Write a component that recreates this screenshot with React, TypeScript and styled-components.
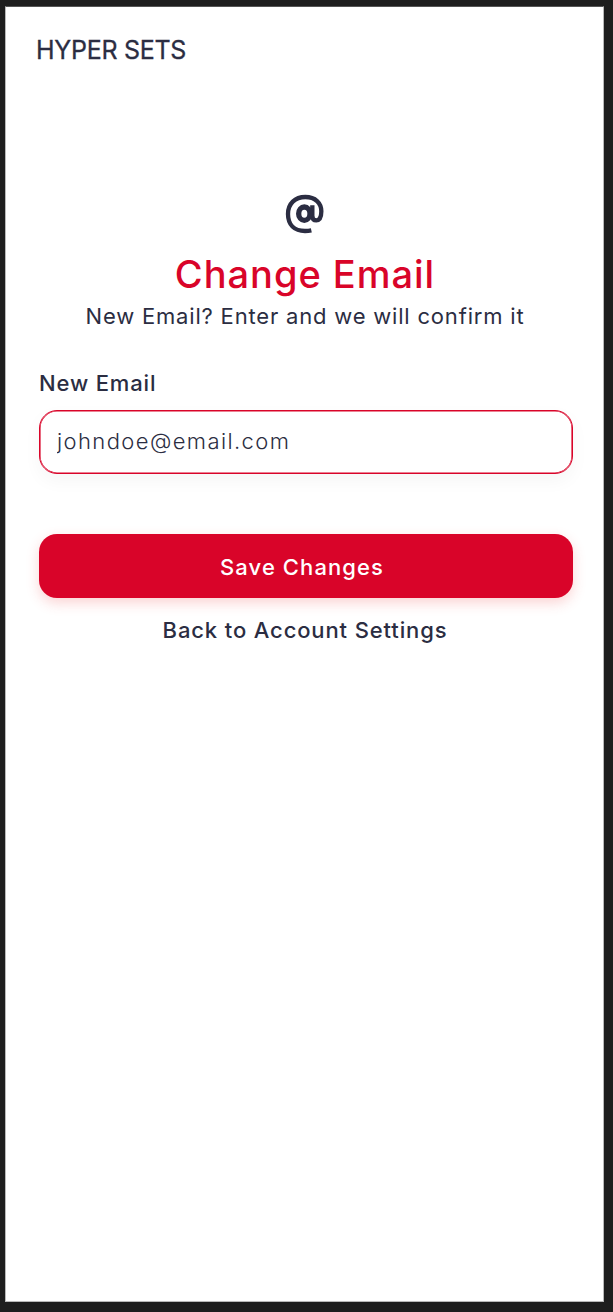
import React from 'react';
import styled, { createGlobalStyle } from 'styled-components';

const ink = '#2b2d42';
const red = '#d90429';

const GlobalStyle = createGlobalStyle`
  * { box-sizing: border-box; }
  body { margin: 0; background: #1e1e1e; font-family: Inter, sans-serif; }
`;
const Frame = styled.div`
  height: 1312px;
  padding: 6px 9px 10px 5px;
  background: #1e1e1e;
`;
const Screen = styled.main`
  height: 1296px;
  background: #fff;
  border: 1px solid #b9b9b9;
  border-top-color: #555;
  color: ${ink};
  padding: 26px 30px 0 33px;
  display: flex;
  flex-direction: column;
`;
const Brand = styled.header`
  margin-left: -3px;
  font-size: 25px;
  line-height: 34px;
  letter-spacing: -0.28px;
  -webkit-text-stroke: 0.3px ${ink};
`;
const Heading = styled.section`
  display: flex;
  flex-direction: column;
  align-items: center;
  margin-top: 127px;
  padding-right: 2px;
  white-space: nowrap;
`;
const AtIcon = styled.svg`
  width: 40px;
  height: 40px;
  margin-right: 2px;
`;
const Title = styled.h1`
  margin: 11px 0 0;
  font-size: 38px;
  line-height: 58px;
  font-weight: 500;
  letter-spacing: 0.98px;
  color: ${red};
`;
const Subtitle = styled.p`
  margin: -2px 0 0;
  font-size: 22px;
  line-height: 30px;
  letter-spacing: 0.81px;
`;
const Form = styled.form`
  display: flex;
  flex-direction: column;
  margin-top: 37px;
`;
const Label = styled.label`
  font-size: 22px;
  line-height: 30px;
  font-weight: 500;
  letter-spacing: 0.85px;
`;
const Field = styled.input`
  height: 64px;
  margin-top: 12px;
  border: 1px solid ${red};
  border-radius: 18px;
  padding: 0 17px 2px;
  font: 300 22px Inter, sans-serif;
  letter-spacing: 1.4px;
  color: ${ink};
  outline: none;
  box-shadow: inset 0 0 0 0.6px ${red}, 0 7px 18px rgba(0, 0, 0, 0.04);
`;
const SaveButton = styled.button`
  height: 64px;
  margin-top: 60px;
  padding: 1px 8px 0 0;
  border: 0;
  border-radius: 18px;
  background: ${red};
  color: #fff;
  font: 500 22px Inter, sans-serif;
  letter-spacing: 1.08px;
  box-shadow: 0 5px 13px rgba(239, 60, 60, 0.22);
`;
const BackLink = styled.a`
  align-self: center;
  margin-top: 17px;
  padding-right: 2px;
  font-size: 22px;
  line-height: 30px;
  font-weight: 500;
  letter-spacing: 0.87px;
`;

export default function App() {
  return (
    <Frame>
      <GlobalStyle />
      <Screen>
        <Brand>HYPER SETS</Brand>
        <Heading>
          <AtIcon viewBox="42 42 120 120" fill="none" stroke={ink} aria-label="Email">
            <path
              d="M124 151Q115 153 105 153C73 153 54 134 54 102C54 71 75 51 106 51C136 51 154 69 154 94C154 112 149 121 139 121C131 121 127 117 127 107V76"
              strokeWidth="13"
            />
            <ellipse cx="103" cy="101" rx="17" ry="20" strokeWidth="16" />
          </AtIcon>
          <Title>Change Email</Title>
          <Subtitle>New Email? Enter and we will confirm it</Subtitle>
        </Heading>
        <Form>
          <Label htmlFor="email">New Email</Label>
          <Field id="email" defaultValue="johndoe@email.com" />
          <SaveButton type="button">Save Changes</SaveButton>
          <BackLink>Back to Account Settings</BackLink>
        </Form>
      </Screen>
    </Frame>
  );
}
